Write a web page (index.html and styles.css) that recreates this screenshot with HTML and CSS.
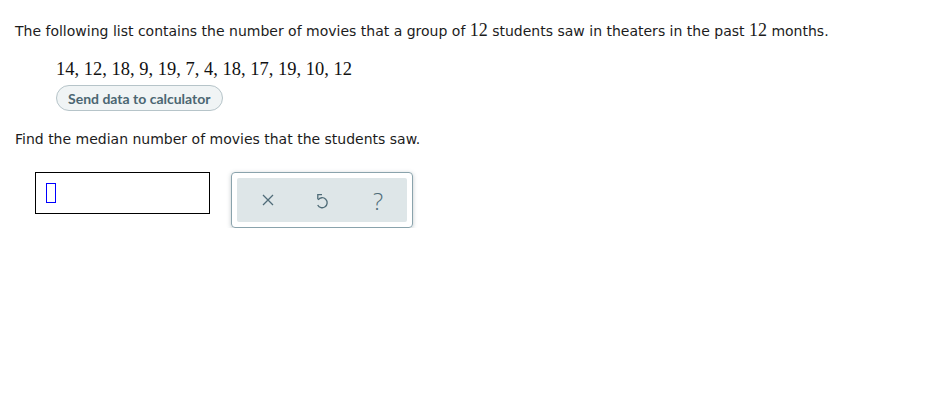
FILE: index.html
```html
<!DOCTYPE html>
<html>
<head>
<meta charset="utf-8">
<link rel="stylesheet" href="styles.css">
</head>
<body>
<div class="page">
  <p class="intro">The following list contains the number of movies that a group of <span class="num">12</span> students saw in theaters in the past <span class="num">12</span> months.</p>
  <div class="data">
    <div class="values">14, 12, 18, 9, 19, 7, 4, 18, 17, 19, 10, 12</div>
    <button class="send">Send data to calculator</button>
  </div>
  <p class="question">Find the median number of movies that the students saw.</p>
  <div class="answer-row">
    <div class="answer-box"><span class="cursor"></span></div>
    <div class="tools">
      <div class="tools-inner">
        <span class="tool x">
          <svg width="12" height="12" viewBox="0 0 12 12"><path d="M1 1 L11 11 M11 1 L1 11" stroke="#4f6c78" stroke-width="1.3" fill="none"/></svg>
        </span>
        <span class="tool">
          <svg width="14" height="17" viewBox="0 0 14 17"><path d="M3.1 7.8 A5 5 0 1 1 2.7 13" stroke="#4f6c78" stroke-width="1.3" fill="none"/><path d="M7 2.6 H2.8 V7.2" stroke="#4f6c78" stroke-width="1.3" fill="none"/></svg>
        </span>
        <span class="tool help">?</span>
      </div>
    </div>
  </div>
</div>
</body>
</html>
```
FILE: styles.css
```css
html, body {
  margin: 0;
  padding: 0;
  background: #fff;
}
.page {
  padding: 20px 15px 0 15px;
  font-family: "DejaVu Sans", Verdana, sans-serif;
  font-size: 14px;
  color: #1c1c1c;
}
.intro {
  margin: 0;
  line-height: 20px;
}
.num {
  font-family: "Liberation Serif", "Times New Roman", serif;
  font-size: 18px;
}
.data {
  padding: 18px 0 0 41px;
}
.values {
  font-family: "Liberation Serif", "Times New Roman", serif;
  font-size: 18.5px;
  line-height: 20px;
  color: #111;
}
.send {
  margin-top: 6px;
  height: 26px;
  padding: 0 11px;
  border: 1px solid #b6c4c9;
  border-radius: 13px;
  background: #f0f4f5;
  color: #4b6672;
  font-family: Lato, "Open Sans", sans-serif;
  font-weight: bold;
  font-size: 14px;
  display: block;
}
.question {
  margin: 18px 0 0 0;
  line-height: 20px;
}
.answer-row {
  display: flex;
  align-items: flex-start;
  gap: 21px;
  margin-top: 23px;
  padding-left: 20px;
}
.answer-box {
  width: 173px;
  height: 40px;
  border: 1px solid #000;
  position: relative;
}
.cursor {
  position: absolute;
  left: 10px;
  top: 10px;
  width: 8px;
  height: 18px;
  border: 1px solid #0000ff;
}
.tools {
  width: 182px;
  height: 56px;
  border: 1px solid #8aa3ac;
  border-radius: 4px;
  box-shadow: 0 1px 4px rgba(80, 100, 110, 0.35);
  box-sizing: border-box;
  padding: 5px;
}
.tools-inner {
  height: 100%;
  background: #dee6e8;
  border-radius: 2px;
  display: flex;
  align-items: center;
  justify-content: center;
}
.tool {
  display: flex;
  align-items: center;
  justify-content: center;
  width: 56px;
  height: 24px;
}
.tool.x {
  padding-left: 3px;
  box-sizing: border-box;
}
.help {
  font-family: "Open Sans", sans-serif;
  font-weight: 300;
  font-size: 24px;
  color: #4f6c78;
}
```
